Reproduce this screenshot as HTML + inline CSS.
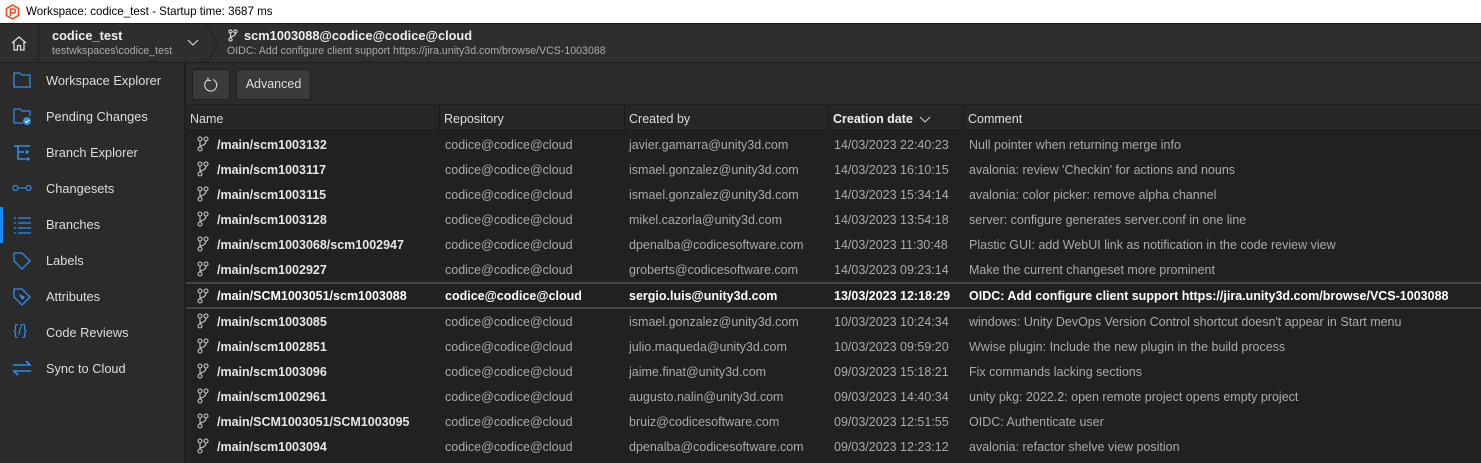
<!DOCTYPE html>
<html><head><style>
*{margin:0;padding:0;box-sizing:border-box}
body{width:1481px;height:463px;overflow:hidden;background:#212121;font-family:"Liberation Sans",sans-serif;font-size:12.5px;color:#ccc;position:relative}
.abs{position:absolute}
#title{left:0;top:0;width:1481px;height:23px;background:#fff;color:#000;font-size:11.6px;line-height:23px;padding-left:26px}
#hdr{left:0;top:23px;width:1481px;height:40px;background:#2e2e2e;border-top:1px solid #1a1a1a;border-bottom:1px solid #1e1e1e}
#side{left:0;top:63px;width:185px;height:400px;background:#2b2b2b;border-right:1px solid #1e1e1e}
.si{position:absolute;left:46px;color:#ddd;font-size:12.8px}
#tb{left:186px;top:63px;width:1295px;height:42px;background:#2b2b2b;border-bottom:1px solid #1e1e1e}
.btn{position:absolute;top:6px;height:31px;background:#3a3a3a;border:1px solid #1e1e1e;border-radius:3px;color:#ddd;line-height:29px;text-align:center;font-size:12.5px}
#ch{left:186px;top:105px;width:1295px;height:26px;background:#262626;border-bottom:1px solid #1c1c1c}
.c{position:absolute;white-space:nowrap;font-size:12.5px}
.sep{position:absolute;top:0;width:1px;height:26px;background:#1a1a1a}
.row{position:absolute;left:186px;width:1295px;height:25px}
.row .c{top:6px}
.sel{border-top:2px solid #444;border-bottom:2px solid #444}
.sel .c{font-weight:bold;color:#fff}
.n{left:31px;color:#e6e6e6;font-weight:bold}
.r{left:259px;color:#aaa}
.u{left:443px;color:#aaa}
.d{left:648px;color:#aaa}
.m{left:783px;color:#aaa}
.bi{position:absolute;left:11px;top:4px}
</style></head><body>
<div id="title" class="abs">Workspace: codice_test - Startup time: 3687 ms</div>
<svg class="abs" style="left:5px;top:4px" width="15" height="16" viewBox="0 0 15 16"><path d="M7.5 1L13.5 4.5V11.5L7.5 15L1.5 11.5V4.5Z" fill="none" stroke="#e8501f" stroke-width="1.6"/><path d="M5.5 12V5H8.5A2 2 0 0 1 8.5 9H5.5" fill="none" stroke="#e8501f" stroke-width="1.6"/></svg>
<div id="hdr" class="abs">
 <svg class="abs" style="left:10px;top:11px" width="18" height="17" viewBox="0 0 18 17"><path d="M2 8L9 2L16 8M4 7V15H7.5V10.5H10.5V15H14V7" fill="none" stroke="#ddd" stroke-width="1.3"/></svg>
 <div class="abs" style="left:38px;top:0;width:1px;height:39px;background:#1e1e1e"></div>
 <div class="abs" style="left:52px;top:4px;font-weight:bold;color:#eee;font-size:12.8px">codice_test</div>
 <div class="abs" style="left:52px;top:21px;color:#aaa;font-size:10.6px">testwkspaces\codice_test</div>
 <svg class="abs" style="left:187px;top:15px" width="12" height="8"><path d="M1 1L6 6L11 1" fill="none" stroke="#ccc" stroke-width="1.2"/></svg>
 <svg class="abs" style="left:205px;top:0" width="14" height="40"><path d="M1 0L13 20L1 40" fill="none" stroke="#1e1e1e" stroke-width="1"/></svg>
 <svg class="abs" style="left:228px;top:5px" width="10" height="13" viewBox="0 0 10 13"><g fill="none" stroke="#ddd" stroke-width="1.1"><circle cx="2.5" cy="2.5" r="1.6"/><circle cx="7.5" cy="2.5" r="1.6"/><circle cx="2.5" cy="10.5" r="1.6"/><path d="M2.5 4V9M7.5 4Q7.5 7 2.5 8"/></g></svg>
 <div class="abs" style="left:244px;top:4px;font-weight:bold;color:#eee;font-size:12.8px">scm1003088@codice@codice@cloud</div>
 <div class="abs" style="left:227px;top:21px;color:#aaa;font-size:10.6px">OIDC: Add configure client support https://jira.unity3d.com/browse/VCS-1003088</div>
</div>
<div id="side" class="abs">
 <div class="abs" style="left:0;top:144px;width:3px;height:36px;background:#1a8cff"></div>
 <svg class="abs" style="left:13px;top:9px" width="18" height="16"><path d="M1 1H7L9 3H17V15H1Z" fill="none" stroke="#2d8ef0" stroke-width="1.3"/></svg>
 <div class="si" style="top:10px">Workspace Explorer</div>
 <svg class="abs" style="left:13px;top:45px" width="19" height="18"><path d="M1 1H7L9 3H17V8M10 15H1V1" fill="none" stroke="#2d8ef0" stroke-width="1.3"/><circle cx="14" cy="13" r="4" fill="#2d8ef0"/><path d="M12 13L13.5 14.5L16 12" stroke="#fff" fill="none" stroke-width="1.2"/></svg>
 <div class="si" style="top:46px">Pending Changes</div>
 <svg class="abs" style="left:13px;top:81px" width="18" height="17"><path d="M1 2H17M5 2V15H13M5 8H11" fill="none" stroke="#2d8ef0" stroke-width="1.6"/><circle cx="14" cy="8" r="1.6" fill="#2d8ef0"/><circle cx="15" cy="15" r="1.6" fill="#2d8ef0"/></svg>
 <div class="si" style="top:82px">Branch Explorer</div>
 <svg class="abs" style="left:12px;top:121px" width="20" height="8"><circle cx="3.5" cy="4" r="2.5" fill="none" stroke="#2d8ef0" stroke-width="1.2"/><circle cx="16.5" cy="4" r="2.5" fill="none" stroke="#2d8ef0" stroke-width="1.2"/><path d="M6 4H14" stroke="#2d8ef0" stroke-width="1.2"/></svg>
 <div class="si" style="top:118px">Changesets</div>
 <svg class="abs" style="left:13px;top:153px" width="19" height="18"><g stroke="#2d8ef0" stroke-width="1.3"><path d="M5 2H18M5 7H18M5 12H18M5 17H18"/><path d="M1 2H3M1 7H3M1 12H3M1 17H3"/></g></svg>
 <div class="si" style="top:154px">Branches</div>
 <svg class="abs" style="left:13px;top:189px" width="18" height="18"><path d="M1 1H9L17 9L9 17L1 9Z" fill="none" stroke="#2d8ef0" stroke-width="1.3"/></svg>
 <div class="si" style="top:190px">Labels</div>
 <svg class="abs" style="left:13px;top:225px" width="18" height="18"><path d="M1 1H9L17 9L9 17L1 9Z" fill="none" stroke="#2d8ef0" stroke-width="1.3"/><path d="M6 6L12 9L9 12Z" fill="#2d8ef0"/></svg>
 <div class="si" style="top:226px">Attributes</div>
 <div class="abs" style="left:13px;top:259px;color:#2d8ef0;font-size:15px">{/}</div>
 <div class="si" style="top:262px">Code Reviews</div>
 <svg class="abs" style="left:12px;top:297px" width="20" height="16"><path d="M1 5H18L14 1M19 11H2L6 15" fill="none" stroke="#2d8ef0" stroke-width="1.6"/></svg>
 <div class="si" style="top:298px">Sync to Cloud</div>
</div>
<div id="tb" class="abs">
 <div class="btn" style="left:6px;width:38px"><svg width="16" height="16" style="margin-top:7px" viewBox="0 0 16 16"><path d="M10 2.5A6 6 0 1 1 5 2.7" fill="none" stroke="#ccc" stroke-width="1.2"/><path d="M5 0.5V3.5H8" fill="none" stroke="#ccc" stroke-width="1.2"/></svg></div>
 <div class="btn" style="left:50px;width:75px">Advanced</div>
</div>
<div id="ch" class="abs">
 <div class="c" style="left:4px;top:7px;color:#ddd">Name</div>
 <div class="sep" style="left:253px"></div>
 <div class="c" style="left:258px;top:7px;color:#ddd">Repository</div>
 <div class="sep" style="left:438px"></div>
 <div class="c" style="left:443px;top:7px;color:#ddd">Created by</div>
 <div class="sep" style="left:642px"></div>
 <div class="c" style="left:647px;top:7px;color:#eee;font-weight:bold">Creation date</div>
 <svg class="abs" style="left:733px;top:11px" width="12" height="7"><path d="M1 1L6 6L11 1" fill="none" stroke="#ccc" stroke-width="1.1"/></svg>
 <div class="sep" style="left:777px"></div>
 <div class="c" style="left:782px;top:7px;color:#ddd">Comment</div>
</div>
<div id="rows"></div>
<script>
var d=[
["/main/scm1003132","javier.gamarra@unity3d.com","14/03/2023 22:40:23","Null pointer when returning merge info"],
["/main/scm1003117","ismael.gonzalez@unity3d.com","14/03/2023 16:10:15","avalonia: review 'Checkin' for actions and nouns"],
["/main/scm1003115","ismael.gonzalez@unity3d.com","14/03/2023 15:34:14","avalonia: color picker: remove alpha channel"],
["/main/scm1003128","mikel.cazorla@unity3d.com","14/03/2023 13:54:18","server: configure generates server.conf in one line"],
["/main/scm1003068/scm1002947","dpenalba@codicesoftware.com","14/03/2023 11:30:48","Plastic GUI: add WebUI link as notification in the code review view"],
["/main/scm1002927","groberts@codicesoftware.com","14/03/2023 09:23:14","Make the current changeset more prominent"],
["/main/SCM1003051/scm1003088","sergio.luis@unity3d.com","13/03/2023 12:18:29","OIDC: Add configure client support https://jira.unity3d.com/browse/VCS-1003088"],
["/main/scm1003085","ismael.gonzalez@unity3d.com","10/03/2023 10:24:34","windows: Unity DevOps Version Control shortcut doesn't appear in Start menu"],
["/main/scm1002851","julio.maqueda@unity3d.com","10/03/2023 09:59:20","Wwise plugin: Include the new plugin in the build process"],
["/main/scm1003096","jaime.finat@unity3d.com","09/03/2023 15:18:21","Fix commands lacking sections"],
["/main/scm1002961","augusto.nalin@unity3d.com","09/03/2023 14:40:34","unity pkg: 2022.2: open remote project opens empty project"],
["/main/SCM1003051/SCM1003095","bruiz@codicesoftware.com","09/03/2023 12:51:55","OIDC: Authenticate user"],
["/main/scm1003094","dpenalba@codicesoftware.com","09/03/2023 12:23:12","avalonia: refactor shelve view position"]];
var tops=[132,157,182,207,232,257,282,309,334,359,384,409,434];
var ic='<svg class="bi" width="12" height="16" viewBox="0 0 12 16"><g fill="none" stroke="#ccc" stroke-width="1.1"><circle cx="3" cy="3" r="2"/><circle cx="9" cy="3" r="2"/><circle cx="3" cy="13" r="2"/><path d="M3 5V11M9 5Q9 9 3 10"/></g></svg>';
var h='';
d.forEach(function(r,i){var s=i==6;var st=s?'top:5px':'';h+='<div class="row'+(s?' sel':'')+'" style="top:'+tops[i]+'px;'+(s?'height:27px':'')+'">'+ic+'<div class="c n" style="'+st+'">'+r[0]+'</div><div class="c r" style="'+st+'">codice@codice@cloud</div><div class="c u" style="'+st+'">'+r[1]+'</div><div class="c d" style="'+st+'">'+r[2]+'</div><div class="c m" style="'+st+'">'+r[3]+'</div></div>';});
document.getElementById('rows').innerHTML=h;
</script>
</body></html>
